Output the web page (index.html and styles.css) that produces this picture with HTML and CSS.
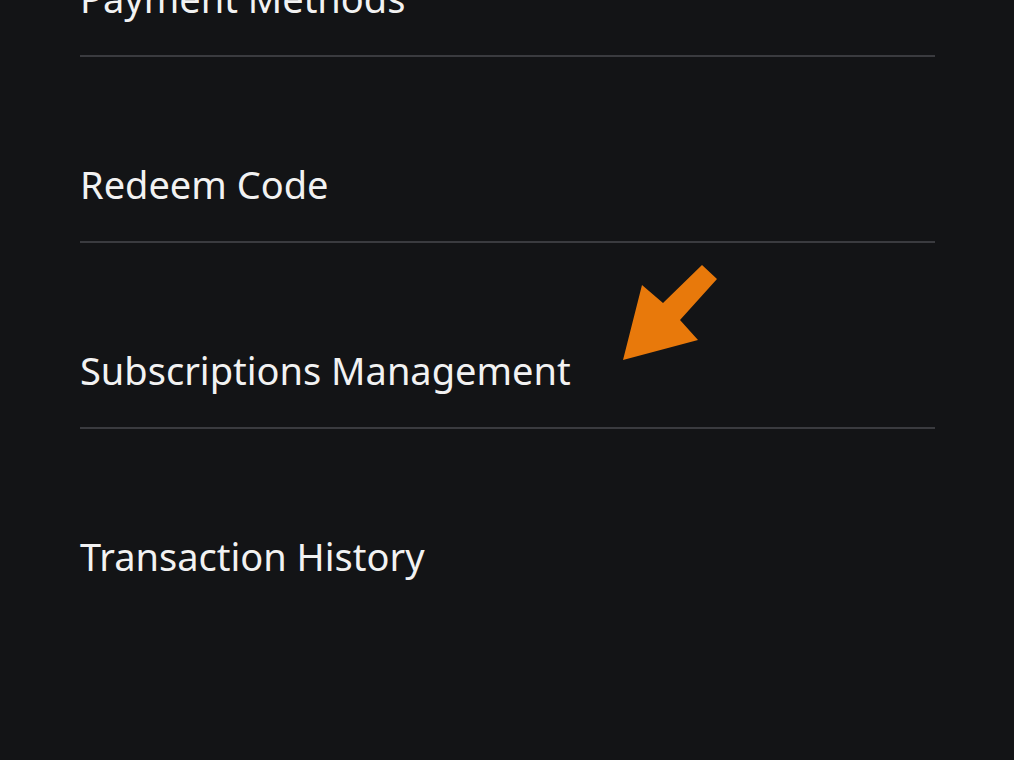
FILE: index.html
```html
<!DOCTYPE html>
<html>
<head>
<meta charset="utf-8"/>
<title>Store Settings</title>
<link rel="stylesheet" href="styles.css">
</head>
<body>
<ul class="menu">
  <li class="menu-item">Payment Methods</li>
  <li class="menu-item">Redeem Code</li>
  <li class="menu-item">Subscriptions Management</li>
  <li class="menu-item last">Transaction History</li>
</ul>

<!-- callout arrow pointing at the subscriptions row -->
<svg class="callout" width="1014" height="760" viewBox="0 0 1014 760">
  <polygon points="702,265 717,279 680,320 698,340 623,360 642,285 663,303" fill="#e8790b"/>
</svg>
</body>
</html>
```

FILE: styles.css
```css
html, body {
  margin: 0;
  padding: 0;
  background-color: #131416;
  height: 100%;
  overflow: hidden;
}

body {
  position: relative;
  font-family: "Noto Sans", "DejaVu Sans", sans-serif;
  color: #f2f2f2;
}

.menu {
  list-style: none;
  margin: -129px 0 0 80px;
  padding: 0;
  width: 855px;
}

.menu-item {
  font-size: 38px;
  line-height: 1;
  padding: 108px 0 38px 0;
  border-bottom: 2px solid #3a3b3f;
}

.menu-item.last {
  border-bottom: none;
}

.callout {
  position: absolute;
  left: 0;
  top: 0;
  pointer-events: none;
}
```
